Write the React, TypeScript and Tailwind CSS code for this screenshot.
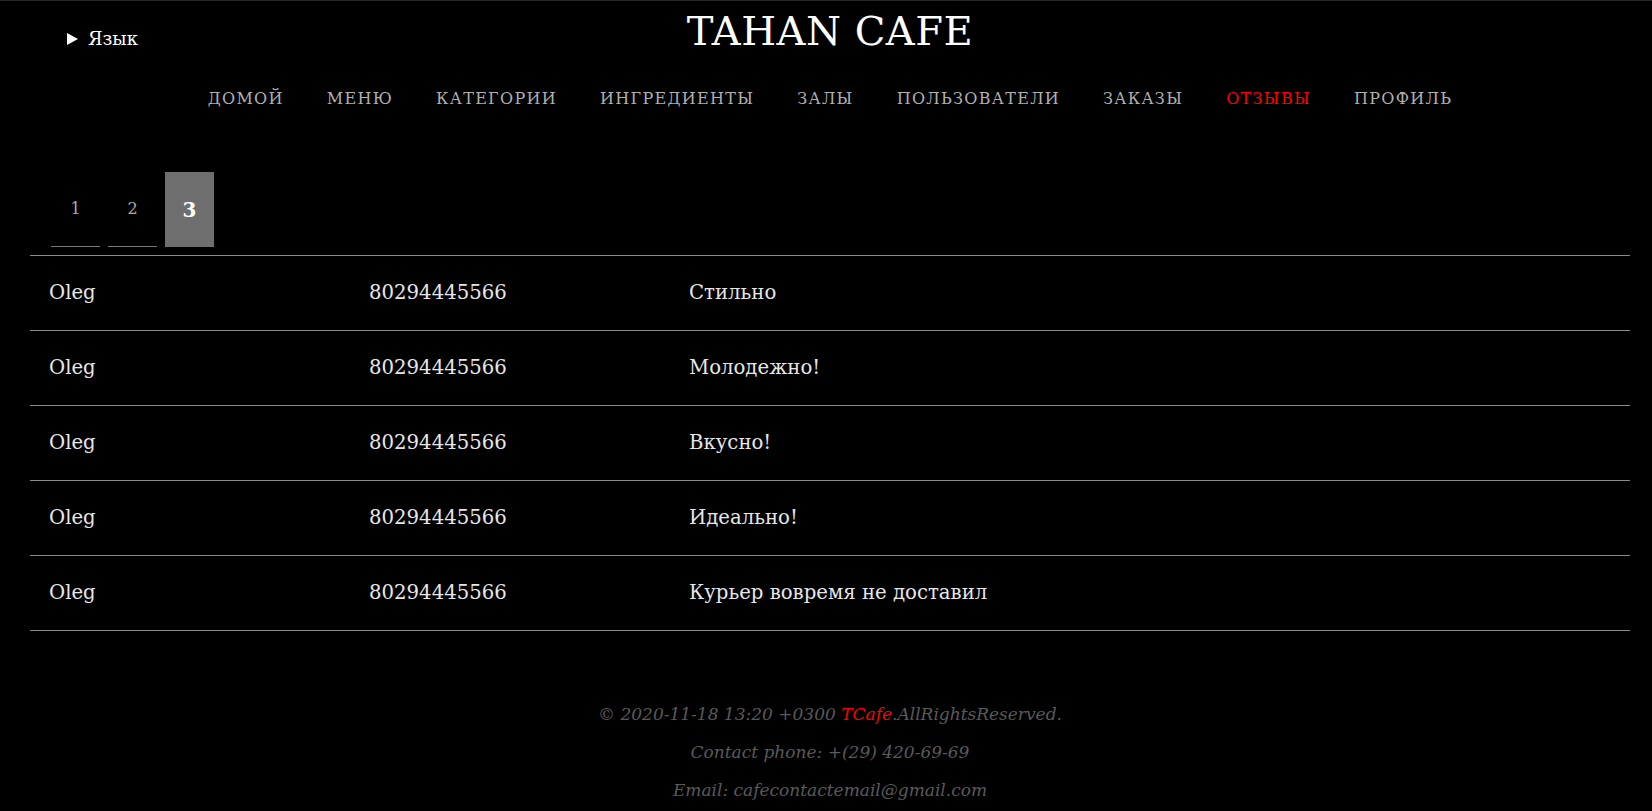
import { useState } from 'react';

const navItems = [
  { label: 'ДОМОЙ' },
  { label: 'МЕНЮ' },
  { label: 'КАТЕГОРИИ' },
  { label: 'ИНГРЕДИЕНТЫ' },
  { label: 'ЗАЛЫ' },
  { label: 'ПОЛЬЗОВАТЕЛИ' },
  { label: 'ЗАКАЗЫ' },
  { label: 'ОТЗЫВЫ', active: true },
  { label: 'ПРОФИЛЬ' },
];

const reviews = [
  { name: 'Oleg', phone: '80294445566', text: 'Стильно' },
  { name: 'Oleg', phone: '80294445566', text: 'Молодежно!' },
  { name: 'Oleg', phone: '80294445566', text: 'Вкусно!' },
  { name: 'Oleg', phone: '80294445566', text: 'Идеально!' },
  { name: 'Oleg', phone: '80294445566', text: 'Курьер вовремя не доставил' },
];

function Header() {
  return (
    <header>
      <div className="grid grid-cols-[1fr_auto_1fr] items-start pt-[10px]">
        {/* Language switcher */}
        <div className="flex items-center gap-[10px] pl-[37px] pt-[14px] text-[18px] text-white">
          <span className="inline-block w-0 h-0 border-y-[6px] border-y-transparent border-l-[11px] border-l-white" />
          <span>Язык</span>
        </div>
        <h1 className="text-[40px] leading-[40px] text-white tracking-[0.5px]">TAHAN CAFE</h1>
        <div />
      </div>

      <nav className="flex justify-center gap-[43px] mt-[35px]">
        {navItems.map((item) => (
          <a
            key={item.label}
            href="#"
            className={`text-[16px] leading-[24px] tracking-[1.3px] ${item.active ? 'text-[#ff0000]' : 'text-[#b0b0b0]'}`}
          >
            {item.label}
          </a>
        ))}
      </nav>
    </header>
  );
}

function Pagination() {
  const [page, setPage] = useState(3);
  return (
    <ul className="flex gap-[8px] pl-[21px] mt-[61px] mb-[8px]">
      {[1, 2, 3].map((p) => (
        <li key={p}>
          <button
            onClick={() => setPage(p)}
            className={`w-[49px] h-[75px] flex items-center justify-center ${
              page === p
                ? 'bg-[#6e6e6e] text-white text-[20px] font-semibold'
                : 'border-b border-[#777] text-[#aaa] text-[16px]'
            }`}
          >
            {p}
          </button>
        </li>
      ))}
    </ul>
  );
}

function ReviewsTable() {
  return (
    <div className="border-t border-[#8a8a8a]">
      {reviews.map((r, i) => (
        <div key={i} className="h-[75px] grid grid-cols-[320px_320px_1fr] items-center border-b border-[#8a8a8a] text-[19.7px] text-[#e6e6e6]">
          <div className="pl-[19px]">{r.name}</div>
          <div className="pl-[19px]">{r.phone}</div>
          <div className="pl-[19px]">{r.text}</div>
        </div>
      ))}
    </div>
  );
}

function Footer() {
  return (
    <footer className="mt-[64px] text-center italic text-[17px] leading-[38px] text-[#5a5a5a]">
      <p>
        © 2020-11-18 13:20 +0300 <span className="text-[#ff0000]">TCafe</span>.AllRightsReserved.
      </p>
      <p>Contact phone: +(29) 420-69-69</p>
      <p>Email: cafecontactemail@gmail.com</p>
    </footer>
  );
}

export default function App() {
  return (
    <div
      className="min-h-screen bg-black border-t border-[#262626] pl-[30px] pr-[22px]"
      style={{ fontFamily: '"DejaVu Serif", serif' }}
    >
      <Header />
      <Pagination />
      <ReviewsTable />
      <Footer />
    </div>
  );
}
